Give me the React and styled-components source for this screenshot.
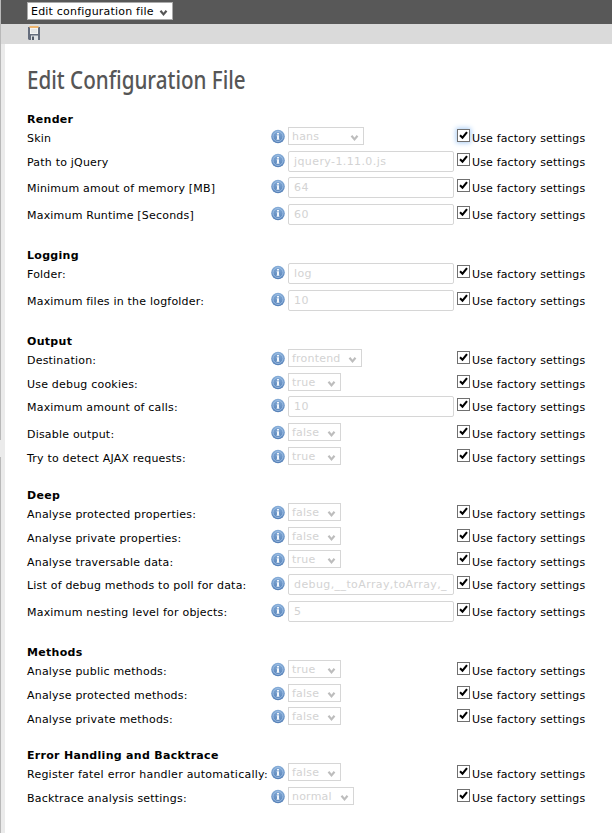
import React from "react";
import styled, { createGlobalStyle } from "styled-components";

const GlobalStyle = createGlobalStyle`
  * { box-sizing: border-box; }
  body {
    margin: 0;
    background: #fff;
    color: #000;
    font: 11px/16px "DejaVu Sans", Verdana, sans-serif;
  }
`;

const Page = styled.div`
  display: flex;
  width: 612px;
  height: 833px;
  overflow: hidden;
`;

const Splitter = styled.div`
  flex: none;
  width: 1px;
  background: linear-gradient(#b9b9b9 440px, #ebebeb 440px, #ebebeb 457px, #b9b9b9 457px);
`;

const Module = styled.main`
  flex: 1;
  min-width: 0;
`;

const DocHeader = styled.header`
  display: flex;
  height: 24px;
  padding: 2px 0 0 26px;
  background: #585858;
`;

const Toolbar = styled.div`
  height: 20px;
  padding: 1px 0 0 26px;
  background: #dadada;
`;

const Body = styled.div`
  height: 789px;
  padding: 21px 0 0 22px;
  border-left: 4px solid #ebebeb;
`;

const Title = styled.h1`
  margin: 0;
  height: 46px;
  font: 500 25px/28px "Noto Sans", sans-serif;
  color: #565656;
  white-space: nowrap;
  transform: scaleX(${(p) => p.$stretch});
  transform-origin: 0 0;
`;

const SectionTitle = styled.h2`
  margin: 0;
  height: 16px;
  font-size: 11px;
  line-height: 18px;
  font-weight: 700;
  letter-spacing: 0.3px;
  white-space: nowrap;
`;

const Row = styled.div`
  display: grid;
  grid-template-columns: 244px 17px 169px 1fr;
  align-items: start;
  height: ${(p) => p.$h}px;
`;

const Label = styled.span`
  padding-top: ${(p) => (p.$low ? 5 : 4)}px;
  white-space: nowrap;
  letter-spacing: ${(p) => p.$ls}px;
`;

const InfoSvg = styled.svg`
  display: block;
  margin-top: 2px;
`;

const SelectBox = styled.div`
  display: flex;
  justify-content: space-between;
  width: ${(p) => p.$w}px;
  height: 18px;
  padding: 0 4px 0 3px;
  border: 1px solid ${(p) => (p.$active ? "#aaa" : "#d6d6d6")};
  background: #fff;
  color: ${(p) => (p.$active ? "#000" : "#d3d3d3")};
  line-height: 17px;
  white-space: nowrap;
  letter-spacing: 0.2px;

  svg {
    flex: none;
    margin-top: 6px;
  }
`;

const InputBox = styled.div`
  width: 166px;
  height: 21px;
  padding: 0 5px;
  border: 1px solid #d6d6d6;
  border-radius: 2px;
  color: #d3d3d3;
  line-height: 20px;
  letter-spacing: 0.4px;
  white-space: nowrap;
  overflow: hidden;
`;

const Factory = styled.label`
  display: flex;
  gap: 2px;
  white-space: nowrap;
`;

const Check = styled.span`
  width: 13px;
  height: 13px;
  margin-top: 2px;
  border: 1px solid #707070;
  background: #fff;
  box-shadow: ${(p) => (p.$focus ? "0 0 5px 1px #a9cdf5" : "none")};

  svg { display: block; }
`;

const Arrow = ({ color }) => (
  <svg width="9" height="8" viewBox="0 0 9 8">
    <path d="M1.500 1.800 4.500 5.400 7.500 1.800" fill="none" stroke={color} strokeWidth="2.2" />
  </svg>
);

const Info = () => (
  <InfoSvg width="14" height="15" viewBox="0 0 14 15">
    <defs>
      <linearGradient id="disc" x1="0" y1="0" x2="0" y2="1">
        <stop offset="0" stopColor="#86add8" />
        <stop offset="1" stopColor="#547fb6" />
      </linearGradient>
    </defs>
    <circle cx="7" cy="7.5" r="6.8" fill="url(#disc)" />
    <circle cx="7" cy="7.5" r="5" fill="none" stroke="#a4c4e8" strokeWidth=".8" />
    <path d="M6 4h2v1.500H6zM5.700 6.300H8v3.500h.4v.9H5.600v-.9H6V7.200h-.3z" fill="#f2f7fd" />
  </InfoSvg>
);

const Floppy = () => (
  <svg width="14" height="16" viewBox="0 0 14 16">
    <path d="M1 2h12v13H2l-1-1z" fill="#656d7d" />
    <path d="M3 2h8v7H3z" fill="#f4f4f4" />
    <path d="M2.500 1h9v2h-9z" fill="#efb56e" />
    <path d="M4 5h6M4 7h6" stroke="#d5d8dc" />
    <path d="M4 10.500h7V15H4z" fill="#dfe2e6" />
    <path d="M5 11.500h2V15H5z" fill="#505867" />
  </svg>
);

const sections = [
  ["Render", [
    ["Skin", "hans", 76, 24],
    ["Path to jQuery", "jquery-1.11.0.js", 0, 26],
    ["Minimum amout of memory [MB]", "64", 0, 27],
    ["Maximum Runtime [Seconds]", "60", 0, 43],
  ]],
  ["Logging", [
    ["Folder:", "log", 0, 27],
    ["Maximum files in the logfolder:", "10", 0, 43],
  ]],
  ["Output", [
    ["Destination:", "frontend", 74, 24],
    ["Use debug cookies:", "true", 53, 23],
    ["Maximum amount of calls:", "10", 0, 27],
    ["Disable output:", "false", 53, 24],
    ["Try to detect AJAX requests:", "true", 53, 40],
  ]],
  ["Deep", [
    ["Analyse protected properties:", "false", 53, 24],
    ["Analyse private properties:", "false", 53, 23],
    ["Analyse traversable data:", "true", 53, 24, true],
    ["List of debug methods to poll for data:", "debug,__toArray,toArray,_", 0, 27],
    ["Maximum nesting level for objects:", "5", 0, 43],
  ]],
  ["Methods", [
    ["Analyse public methods:", "true", 53, 24],
    ["Analyse protected methods:", "false", 53, 23],
    ["Analyse private methods:", "false", 53, 40, true],
  ]],
  ["Error Handling and Backtrace", [
    ["Register fatel error handler automatically:", "false", 53, 24],
    ["Backtrace analysis settings:", "normal", 66, 24],
  ]],
];

const Setting = ({ label, value, width, height, low, focused }) => (
  <Row $h={height}>
    <Label $ls={label.length > 40 ? 0.24 : 0.2} $low={low}>{label}</Label>
    <Info />
    {width ? (
      <SelectBox $w={width}>
        {value}
        <Arrow color="#bdbdbd" />
      </SelectBox>
    ) : (
      <InputBox>{value}</InputBox>
    )}
    <Factory>
      <Check $focus={focused}>
        <svg width="11" height="11" viewBox="0 0 11 11">
          <path d="M2 5.300 4.500 7.700 9 2.200" fill="none" stroke="#000" strokeWidth="2.100" />
        </svg>
      </Check>
      <Label $ls={0.16} $low={low}>Use factory settings</Label>
    </Factory>
  </Row>
);

export default function App() {
  return (
    <>
      <GlobalStyle />
      <Page>
        <Splitter />
        <Module>
          <DocHeader>
            <SelectBox $active $w={146}>
              Edit configuration file
              <Arrow color="#555" />
            </SelectBox>
          </DocHeader>
          <Toolbar><Floppy /></Toolbar>
          <Body>
            <Title $stretch={0.825}>Edit Configuration File</Title>
            {sections.map(([title, rows], s) => (
              <section key={title}>
                <SectionTitle>{title}</SectionTitle>
                {rows.map(([label, value, width, height, low], i) => (
                  <Setting
                    key={label}
                    label={label}
                    value={value}
                    width={width}
                    height={height}
                    low={low}
                    focused={s === 0 && i === 0}
                  />
                ))}
              </section>
            ))}
          </Body>
        </Module>
      </Page>
    </>
  );
}
